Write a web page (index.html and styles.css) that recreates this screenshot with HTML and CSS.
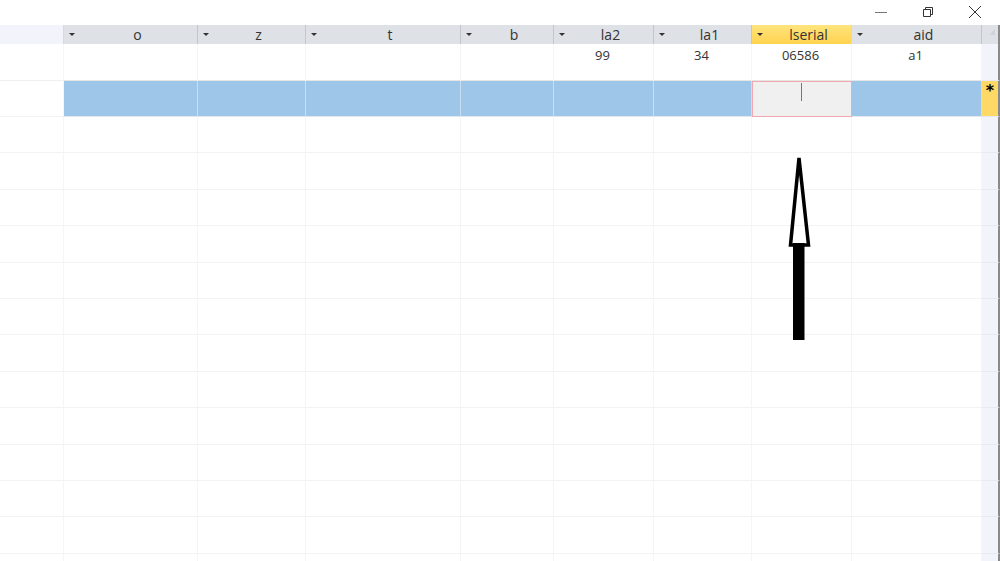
FILE: index.html
```html
<!DOCTYPE html>
<html>
  <head>
    <title>Table</title>
    <link rel="stylesheet" href="styles.css">
  </head>
  <body>
    <div class="titlebar">
      <span class="win-btn">
        <svg width="14" height="14" viewBox="0 0 14 14"><path d="M1 7.5h12" stroke="#777" stroke-width="1"/></svg>
      </span>
      <span class="win-btn">
        <svg width="14" height="14" viewBox="0 0 14 14"><path d="M2.5 4.5h7v7h-7z M4.5 4.5v-2h7v7h-2" fill="none" stroke="#333" stroke-width="1"/></svg>
      </span>
      <span class="win-btn">
        <svg width="14" height="14" viewBox="0 0 14 14"><path d="M1 1l12 12M13 1L1 13" stroke="#333" stroke-width="1"/></svg>
      </span>
    </div>

    <div class="sheet">
      <div class="row head">
        <div class="cell selector"></div>
        <div class="cell"><span class="drop"></span>o</div>
        <div class="cell"><span class="drop"></span>z</div>
        <div class="cell"><span class="drop"></span>t</div>
        <div class="cell"><span class="drop"></span>b</div>
        <div class="cell"><span class="drop"></span>la2</div>
        <div class="cell"><span class="drop"></span>la1</div>
        <div class="cell active"><span class="drop"></span>lserial</div>
        <div class="cell"><span class="drop"></span>aid</div>
        <div class="cell corner"><span class="tri"></span></div>
      </div>

      <div class="row record">
        <div class="cell selector"></div>
        <div class="cell"></div>
        <div class="cell"></div>
        <div class="cell"></div>
        <div class="cell"></div>
        <div class="cell">99</div>
        <div class="cell">34</div>
        <div class="cell">06586</div>
        <div class="cell">a1</div>
        <div class="cell strip"></div>
      </div>

      <div class="row new-record">
        <div class="cell selector"></div>
        <div class="cell"></div>
        <div class="cell"></div>
        <div class="cell"></div>
        <div class="cell"></div>
        <div class="cell"></div>
        <div class="cell"></div>
        <div class="cell editing"><span class="caret"></span></div>
        <div class="cell"></div>
        <div class="cell strip star">*</div>
      </div>

      <div id="empty-rows"></div>

      <svg class="arrow" width="30" height="190" viewBox="0 0 30 190">
        <polygon points="13,4 22.5,91 4.5,91" fill="none" stroke="#000" stroke-width="3.5" stroke-linejoin="miter"/>
        <rect x="7" y="89" width="11.5" height="97" fill="#000"/>
      </svg>
    </div>

    <script>
      const emptyRows = document.getElementById("empty-rows");
      for (let i = 0; i < 13; i++) {
        const row = document.createElement("div");
        row.className = "row empty";
        for (let c = 0; c < 10; c++) {
          const cell = document.createElement("div");
          cell.className = "cell";
          if (c === 0) cell.classList.add("selector");
          if (c === 9) cell.classList.add("strip");
          row.appendChild(cell);
        }
        emptyRows.appendChild(row);
      }
    </script>
  </body>
</html>
```

FILE: styles.css
```css
html {
  overflow: hidden;
}
body {
  margin: 0;
  font-family: "Open Sans", "Noto Sans", Arial, sans-serif;
  font-size: 13px;
  color: #333;
  background: #fff;
  overflow: hidden;
  width: 1000px;
  height: 561px;
}
.titlebar {
  height: 25px;
  display: flex;
  justify-content: flex-end;
  align-items: center;
  gap: 33px;
  padding-right: 18px;
  box-sizing: border-box;
}
.titlebar .win-btn {
  width: 14px;
  height: 14px;
  display: flex;
  margin-top: -2px;
}
.sheet {
  position: relative;
  height: 536px;
  overflow: hidden;
}
.row {
  display: grid;
  grid-template-columns: 64px 134px 108px 155px 93px 100px 98px 100px 130px 18px;
}
.cell {
  box-sizing: border-box;
  border-right: 1px solid #f5f5f5;
  border-bottom: 1px solid #f3f3f3;
  text-align: center;
  position: relative;
}
.head {
  height: 19px;
}
.head .cell {
  background: #dee1e6;
  border-right: 1px solid #c3c6cc;
  border-bottom: none;
  font-size: 14px;
  line-height: 19px;
  color: #333;
  padding-left: 14px;
}
.head .cell.selector {
  background: #f3f4fb;
  border-right: 1px solid #d6d9e0;
}
.head .cell.active {
  background: linear-gradient(#ffe47e, #ffd34f);
  border-right: 1px solid #e8d9a8;
}
.head .cell.corner {
  background: #dee1e6;
  border-right: 2px solid #8a8a8a;
}
.drop {
  position: absolute;
  left: 5px;
  top: 8px;
  width: 0;
  height: 0;
  border-left: 3px solid transparent;
  border-right: 3px solid transparent;
  border-top: 3px solid #333;
}
.tri {
  position: absolute;
  right: 3px;
  top: 4px;
  width: 0;
  height: 0;
  border-left: 6px solid transparent;
  border-bottom: 6px solid #cfd3da;
}
.record {
  height: 37px;
}
.record .cell {
  line-height: 20px;
  padding-top: 1px;
  padding-right: 2px;
  border-bottom: 1px solid #e6e6e6;
}
.record .cell.selector {
  border-bottom: 1px solid #f0f0f0;
}
.new-record {
  height: 36px;
}
.new-record .cell {
  background: #9dc6e8;
  border-right: 1px solid #c8dff2;
  border-bottom: 1px solid #e3e8ed;
}
.new-record .cell.selector {
  background: #fff;
  border-right: 1px solid #f5f5f5;
  border-bottom: 1px solid #f3f3f3;
}
.new-record .cell.editing {
  background: #f0f0f0;
  border: 1px solid #f3a7ae;
}
.caret {
  position: absolute;
  left: 48px;
  top: 1px;
  width: 1px;
  height: 18px;
  background: #777;
}
.new-record .cell.star {
  background: #ffd966;
  border-right: 2px solid #8a8a8a;
  color: #000;
  font-family: "DejaVu Sans", sans-serif;
  font-size: 16px;
  font-weight: bold;
  line-height: 18px;
  padding-top: 1px;
}
.empty {
  height: 36.4px;
}
.strip {
  background: #f3f4fb;
  border-right: 2px solid #8a8a8a;
}
.empty .cell.strip,
.record .cell.strip {
  border-bottom: 1px solid #e9eaf1;
}
.arrow {
  position: absolute;
  left: 786px;
  top: 129px;
}
```
